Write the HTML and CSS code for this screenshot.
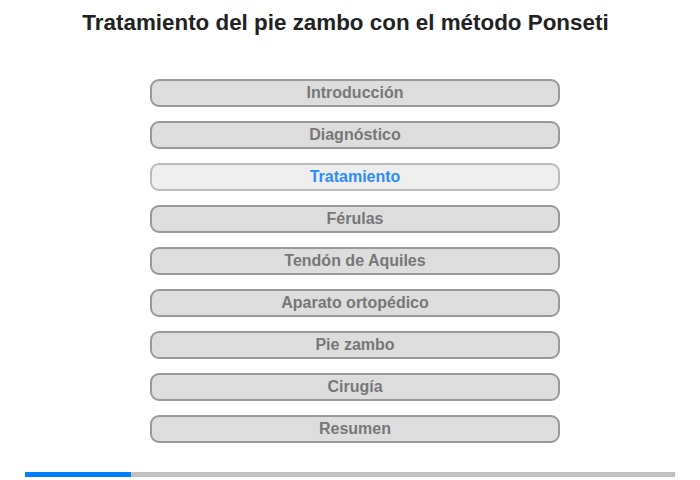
FILE: index.html
```html
<!DOCTYPE html>
<html lang="es">
<head>
<meta charset="utf-8">
<title>Tratamiento del pie zambo</title>
<link rel="stylesheet" href="styles.css">
</head>
<body>
<div class="page">
  <h1 class="title">Tratamiento del pie zambo con el método Ponseti</h1>
  <nav class="menu">
    <div class="item">Introducción</div>
    <div class="item">Diagnóstico</div>
    <div class="item active">Tratamiento</div>
    <div class="item">Férulas</div>
    <div class="item">Tendón de Aquiles</div>
    <div class="item">Aparato ortopédico</div>
    <div class="item">Pie zambo</div>
    <div class="item">Cirugía</div>
    <div class="item">Resumen</div>
  </nav>
  <div class="progress"><div class="progress-fill" style="width:106px"></div></div>
</div>
</body>
</html>
```

FILE: styles.css
```css
html, body {
  margin: 0;
  padding: 0;
  background: #fff;
}
.page {
  width: 700px;
  height: 480px;
  display: flex;
  flex-direction: column;
  font-family: "Liberation Sans", Arial, sans-serif;
}
.title {
  margin: 11px 0 0 0;
  padding-right: 9px;
  height: 24px;
  line-height: 24px;
  font-size: 22.4px;
  font-weight: bold;
  color: #222;
  text-align: center;
  white-space: nowrap;
}
.menu {
  margin: 44px 0 0 150px;
  width: 410px;
  display: flex;
  flex-direction: column;
  gap: 14px;
}
.item {
  box-sizing: border-box;
  height: 28px;
  border: 2px solid #999;
  border-radius: 9px;
  background: #ddd;
  color: #777;
  font-size: 16px;
  font-weight: bold;
  line-height: 24px;
  text-align: center;
}
.item.active {
  border-color: #bbb;
  background: #eee;
  color: #2b8cff;
}
.progress {
  margin: 29px 0 0 25px;
  width: 650px;
  height: 5px;
  background: #c0c0c0;
}
.progress-fill {
  height: 100%;
  background: #0080ff;
}
```
